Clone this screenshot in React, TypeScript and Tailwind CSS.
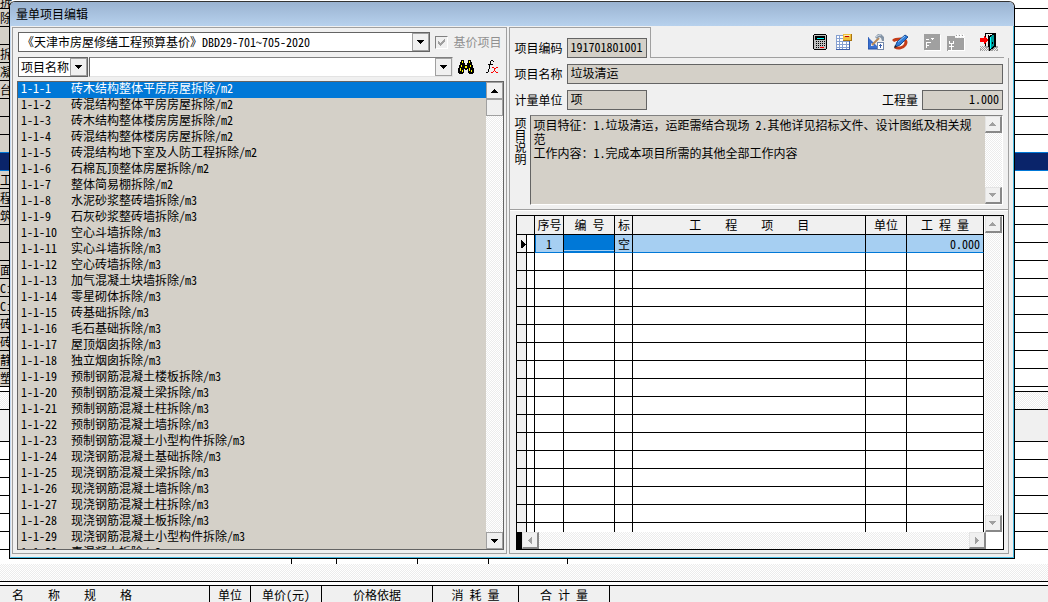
import React from 'react';
import clsx from 'clsx';

const items = [
  ['1-1-1', '砖木结构整体平房房屋拆除/m2'],
  ['1-1-2', '砖混结构整体平房房屋拆除/m2'],
  ['1-1-3', '砖木结构整体楼房房屋拆除/m2'],
  ['1-1-4', '砖混结构整体楼房房屋拆除/m2'],
  ['1-1-5', '砖混结构地下室及人防工程拆除/m2'],
  ['1-1-6', '石棉瓦顶整体房屋拆除/m2'],
  ['1-1-7', '整体简易棚拆除/m2'],
  ['1-1-8', '水泥砂浆整砖墙拆除/m3'],
  ['1-1-9', '石灰砂浆整砖墙拆除/m3'],
  ['1-1-10', '空心斗墙拆除/m3'],
  ['1-1-11', '实心斗墙拆除/m3'],
  ['1-1-12', '空心砖墙拆除/m3'],
  ['1-1-13', '加气混凝土块墙拆除/m3'],
  ['1-1-14', '零星砌体拆除/m3'],
  ['1-1-15', '砖基础拆除/m3'],
  ['1-1-16', '毛石基础拆除/m3'],
  ['1-1-17', '屋顶烟囱拆除/m3'],
  ['1-1-18', '独立烟囱拆除/m3'],
  ['1-1-19', '预制钢筋混凝土楼板拆除/m3'],
  ['1-1-20', '预制钢筋混凝土梁拆除/m3'],
  ['1-1-21', '预制钢筋混凝土柱拆除/m3'],
  ['1-1-22', '预制钢筋混凝土墙拆除/m3'],
  ['1-1-23', '预制钢筋混凝土小型构件拆除/m3'],
  ['1-1-24', '现浇钢筋混凝土基础拆除/m3'],
  ['1-1-25', '现浇钢筋混凝土梁拆除/m3'],
  ['1-1-26', '现浇钢筋混凝土墙拆除/m3'],
  ['1-1-27', '现浇钢筋混凝土柱拆除/m3'],
  ['1-1-28', '现浇钢筋混凝土板拆除/m3'],
  ['1-1-29', '现浇钢筋混凝土小型构件拆除/m3'],
  ['1-1-30', '素混凝土拆除/m3'],
];

const backRows = ['除', '', '拆', '凝', '台', '', '', '', '', '工', '程', '筑', '', '', '面', 'C±', 'C±', '砖', '砖', '静', '塑'];
const SELECTED_BACK_ROW = 8;

const checker = 'bg-[repeating-conic-gradient(#ececec_0_25%,#ffffff_0_50%)] bg-[length:2px_2px]';

type Direction = 'up' | 'down' | 'left' | 'right';

const arrowPaths: Record<Direction, string> = {
  up: 'M3 0h1v1h1v1h1v1h1v1H0V3h1V2h1V1h1z',
  down: 'M0 0h7v1H6v1H5v1H4v1H3V3H2V2H1V1H0z',
  left: 'M3 0h1v7H3V6H2V5H1V4H0V3h1V2h1V1h1z',
  right: 'M0 0h1v1h1v1h1v1h1v1H3v1H2v1H1v1H0z',
};

function Arrow({ direction, className }: { direction: Direction; className?: string }) {
  const flat = direction === 'up' || direction === 'down';
  return (
    <svg
      width={flat ? 7 : 4}
      height={flat ? 4 : 7}
      shapeRendering="crispEdges"
      className={className}
      aria-hidden={true}
    >
      <path d={arrowPaths[direction]} fill="currentColor" />
    </svg>
  );
}

function ScrollButton({ direction, disabled, label }: { direction: Direction; disabled?: boolean; label: string }) {
  return (
    <button
      type="button"
      aria-label={label}
      disabled={disabled}
      className={clsx(
        'flex size-[17px] shrink-0 items-center justify-center bg-[#f0f0f0]',
        disabled
          ? 'border-t border-l border-r-2 border-b-2 border-t-[#e3e3e3] border-l-[#e3e3e3] border-r-[#888888] border-b-[#888888] text-[#a0a0a0]'
          : 'border border-[#a0a0a0] text-black'
      )}
    >
      <Arrow direction={direction} />
    </button>
  );
}

function DropArrow() {
  return (
    <span className="pointer-events-none absolute top-px right-px bottom-px flex w-[17px] items-center justify-center border border-[#a0a0a0] bg-[#f0f0f0]">
      <Arrow direction="down" />
    </span>
  );
}

function Field({ id, value, className }: { id: string; value: string; className?: string }) {
  return (
    <input
      id={id}
      readOnly
      value={value}
      className={clsx('h-5 min-w-0 border border-[#646464] bg-[#d4d0c8] px-[3px] pb-[3px] outline-none', className)}
    />
  );
}

function BinocularsIcon() {
  return (
    <svg width="16" height="14" shapeRendering="crispEdges" aria-hidden={true}>
      <path
        d="M3 0h3v3h1v2h2V3h1V0h3v2h1v3h1v3h1v5h-1v1h-4v-1h-1V9H9v1H7V9H6v4H5v1H1v-1H0V8h1V5h1V2h1z"
        fill="#000"
      />
      <path d="M4 1h1v2H4zM11 1h1v2h-1zM3 5h1v2H3zM2 8h1v3H2zM12 5h1v2h-1zM11 8h1v3h-1zM7 6h2v2H7zM4 10h1v2H4zM13 10h1v2h-1z" fill="#ffff00" />
    </svg>
  );
}

function FunctionIcon() {
  return (
    <svg width="12" height="14" shapeRendering="crispEdges" aria-hidden={true}>
      <path d="M5 0h2v1H5zM7 1h1v1H7zM4 1h1v3H4zM2 4h5v1H2zM3 5h1v4H3zM2 9h1v3H2zM0 12h2v1H0z" fill="#000" />
      <path d="M6 7h2v1H6zM8 8h1v1H8zM8 9h1v2H8zM10 7h2v1h-2zM9 8h1v1H9zM7 11h1v1H7zM9 11h1v1H9zM5 12h2v1H5zM10 12h2v1h-2z" fill="#ff0000" />
    </svg>
  );
}

function CalculatorIcon() {
  return (
    <svg width="14" height="16" shapeRendering="crispEdges" aria-hidden={true}>
      <path d="M1 0h12v1h1v14h-1v1H1v-1H0V1h1z" fill="#000" />
      <path d="M1 1h12v14H1z" fill="#c0c0c0" />
      <path d="M2 2h10v4H2z" fill="#000" />
      <path d="M4 4h7v1H4z" fill="#00ffff" />
      <path d="M3 7h1v1H3zM5 7h1v1H5zM7 7h1v1H7zM9 7h1v1H9zM11 7h1v1h-1zM3 9h1v1H3zM5 9h1v1H5zM7 9h1v1H7zM9 9h1v1H9zM11 9h1v1h-1zM3 11h1v1H3zM5 11h1v1H5zM7 11h1v1H7zM9 11h1v1H9zM11 11h1v1h-1zM3 13h1v1H3zM5 13h1v1H5z" fill="#000" />
      <path d="M7 13h4v1H7z" fill="#ff0000" />
    </svg>
  );
}

function SheetIcon() {
  return (
    <svg width="17" height="16" shapeRendering="crispEdges" aria-hidden={true}>
      <path d="M0 1h14v15H0z" fill="#fff" />
      <path d="M0 1h7v1H0zM0 4h7v1H0zM0 7h14v1H0zM0 10h14v1H0zM0 13h14v1H0zM0 1h1v15H0zM3 1h1v15H3zM6 7h1v9H6zM10 7h1v9h-1z" fill="#86a0d0" />
      <path d="M0 15h14v1H0zM13 7h1v9h-1z" fill="#3c5ea8" />
      <path d="M7 0h9v7H7z" fill="#a87412" />
      <path d="M7 0h8v6H7z" fill="#f0bf3c" />
      <path d="M8 1h6v1H8z" fill="#fdeeb0" />
      <path d="M9 2h4v1H9z" fill="#c00000" />
    </svg>
  );
}

function ToolsIcon() {
  return (
    <svg width="17" height="16" aria-hidden={true}>
      <path fillRule="evenodd" d="M0 3v12h12zM3 9v3h3z" fill="#3a70d0" />
      <path d="M0 3v12h10" fill="none" stroke="#1f4aa0" />
      <path d="M11 4L4 11" stroke="#b98a58" strokeWidth="2" />
      <path d="M7 3l3-3h3l3 3v4h-2l-1-3-2-1-2 2z" fill="#8494a6" />
      <path d="M8 3l3-2h2" fill="none" stroke="#d5dfe9" />
      <path d="M9 8h7v8H9z" fill="#7388aa" />
      <path d="M10 9h5v6h-5z" fill="#fff" />
      <path d="M12 10h1v4h-1zM11 11h3v1h-3z" fill="#3c5ea8" />
    </svg>
  );
}

function PenIcon() {
  return (
    <svg width="17" height="16" aria-hidden={true}>
      <path d="M1 7c2-2 5-2 8-2 5 0 6 3 4 6-2 3-7 4-10 2" fill="none" stroke="#c43c18" strokeWidth="3" />
      <path d="M3 13l2-5 8-7 3 2-8 8z" fill="#2f7cd8" stroke="#154a96" />
      <path d="M6 8l7-6" stroke="#8cc8ff" strokeWidth="1" />
      <path d="M2 14l1-3 2 2z" fill="#202020" />
    </svg>
  );
}

function ReportIcon() {
  return (
    <svg width="17" height="17" shapeRendering="crispEdges" aria-hidden={true}>
      <path d="M1 1h16v16H1z" fill="#fff" />
      <path d="M0 0h16v16H0z" fill="#a0a0a0" />
      <path d="M2 5h3v1H2zM7 4h3v1H7zM8 5h1v1H8zM2 8h5v1H2zM2 9h1v5H2zM3 11h2v1H3z" fill="#fff" />
    </svg>
  );
}

function NotesIcon() {
  return (
    <svg width="19" height="17" shapeRendering="crispEdges" aria-hidden={true}>
      <path d="M0 2h8v2h10v1h-1v12H0z" fill="#a0a0a0" />
      <path d="M10 0h1v4h-1zM13 0h1v4h-1zM16 0h1v4h-1zM8 2h10v1H8zM2 7h1v2H2zM6 7h1v2H6zM2 9h5v1H2zM2 12h5v1H2zM4 9h1v7H4zM17 4h1v13h-1zM1 16h17v1H1z" fill="#fff" />
      <path d="M9 1h1v1H9zM12 1h1v1h-1zM15 1h1v1h-1z" fill="#a0a0a0" />
    </svg>
  );
}

function ExitIcon() {
  return (
    <svg width="18" height="18" shapeRendering="crispEdges" aria-hidden={true}>
      <path d="M0 13h18v5H0z" fill="#a0a0a0" />
      <path
        d="M1 13h1v1H1zM3 13h1v1H3zM0 14h1v1H0zM2 14h1v1H2zM4 14h1v1H4zM1 15h1v1H1zM3 15h1v1H3zM5 15h1v1H5zM7 15h1v1H7zM2 16h1v1H2zM4 16h1v1H4zM6 16h1v1H6zM1 17h1v1H1zM3 17h1v1H3zM5 17h1v1H5zM7 17h1v1H7zM13 17h1v1h-1zM15 17h1v1h-1zM14 16h1v1h-1zM16 16h1v1h-1zM15 15h1v1h-1zM17 15h1v1h-1z"
        fill="#f0f0f0"
      />
      <path d="M5 0h11v1H5zM5 0h1v13H5zM15 0h1v14h-1zM8 2h1v12H8z" fill="#000" />
      <path d="M9 3h1V2h2V1h3v13h-1v1h-1v1h-2v1h-1v1H9z" fill="#000" />
      <path d="M10 4h1V3h1V2h2v11h-1v1h-1v1h-1v1h-1z" fill="#009a9a" />
      <path d="M10 4h1v12h-1z" fill="#00ffff" />
      <path d="M12 9h1v2h-1z" fill="#000" />
      <path d="M0 5h4V3h1v1h1v1h1v1h1v2H7v1H6v1H5v1H4V9H0z" fill="#ff0000" />
    </svg>
  );
}

function ToolButton({ label, disabled, className, children }: { label: string; disabled?: boolean; className?: string; children: React.ReactNode }) {
  return (
    <button type="button" aria-label={label} disabled={disabled} className={clsx('flex shrink-0 items-center', className)}>
      {children}
    </button>
  );
}

function BackSheet() {
  return (
    <div className="flex h-full flex-col overflow-hidden bg-white">
      <div className="flex h-[9px] shrink-0 border-b border-black">
        <div className="flex w-3 items-end overflow-hidden bg-[#d4d0c8] leading-3">拆</div>
      </div>
      {backRows.map((text, i) => (
        <div
          key={i}
          className={clsx(
            'flex h-[18px] shrink-0 border-b leading-[17px]',
            i === SELECTED_BACK_ROW
              ? 'border-[#0078d7] bg-[#0a246a]'
              : i === SELECTED_BACK_ROW - 1
                ? 'border-[#0078d7]'
                : 'border-black'
          )}
        >
          <div className={clsx('w-3', i !== SELECTED_BACK_ROW && 'bg-[#d4d0c8]')}>{text}</div>
        </div>
      ))}
      <div className="h-[5px] shrink-0 border-b border-black" />
      <div className={clsx('h-[18px] shrink-0 border-b border-black', checker)} />
      <div className="h-8 shrink-0 border-b border-black bg-[#f0f0f0]" />
      {[0, 1, 2, 3, 4, 5].map((i) => (
        <div key={i} className="h-[18px] shrink-0 border-b border-black" />
      ))}
      <div className="flex min-h-0 flex-1">
        <div className="w-[292px] border-r border-black" />
        <div className="w-[45px] border-r border-black" />
        <div className="w-[81px] border-r border-black" />
        <div className="w-[71px] border-r border-black" />
        <div className="w-[79px] border-r border-black" />
      </div>
      <div className={clsx('h-[18px] shrink-0 border-b border-black', checker)} />
      <div className="h-1 shrink-0 border-b border-black bg-white" />
      <div className="flex h-4 shrink-0 bg-[#f0f0f0] text-center leading-[18px] whitespace-pre">
        <div className="w-[210px] border-r border-black pl-3 text-left">名    称    规    格</div>
        <div className="w-[41px] border-r border-black">单位</div>
        <div className="w-[71px] border-r border-black">单价(元)</div>
        <div className="w-[111px] border-r border-black">价格依据</div>
        <div className="w-[86px] border-r border-black">消 耗 量</div>
        <div className="w-[91px] border-r border-black">合 计 量</div>
      </div>
    </div>
  );
}

function PriceListPanel() {
  return (
    <section className="flex min-w-0 flex-col border border-[#a0a0a0] pt-1 pr-[2px] pb-[3px] pl-1">
      <div className="flex h-5 items-center pr-[3px]">
        <div className="relative ml-px min-w-0 flex-1">
          <select
            aria-label="定额库"
            className="block h-5 w-full appearance-none border border-[#646464] bg-white pl-[3px] leading-4 outline-none"
          >
            <option>《天津市房屋修缮工程预算基价》DBD29-701~705-2020</option>
          </select>
          <DropArrow />
        </div>
        <label className="ml-[5px] flex shrink-0 items-center gap-[5px] text-[#909090]">
          <span className="relative flex">
            <input
              type="checkbox"
              defaultChecked
              disabled
              className="size-[13px] appearance-none border border-t-[#808080] border-r-white border-b-white border-l-[#808080] bg-[#f0f0f0]"
            />
            <svg width="9" height="8" shapeRendering="crispEdges" className="absolute top-[2px] left-[2px]" aria-hidden={true}>
              <path d="M1 3h1v1h1v1h1V4h1V3h1V2h1V1h1v3H7v1H6v1H5v1H4v1H3V7H2V6H1z" fill="#a0a0a0" />
            </svg>
          </span>
          基价项目
        </label>
      </div>
      <div className="mt-[5px] flex h-5 items-center pr-[2px]">
        <div className="relative ml-px w-[70px] shrink-0">
          <select
            aria-label="查找字段"
            className="block h-5 w-full appearance-none border border-[#646464] bg-white pl-[2px] leading-4 outline-none"
          >
            <option>项目名称</option>
          </select>
          <DropArrow />
        </div>
        <div className="relative ml-px min-w-0 flex-1">
          <input
            aria-label="查找内容"
            className="block h-5 w-full border border-t-[#808080] border-r-[#e3e3e3] border-b-[#e3e3e3] border-l-[#646464] bg-white px-1 outline-none"
          />
          <DropArrow />
        </div>
        <button type="button" aria-label="查找" className="ml-[5px] shrink-0">
          <BinocularsIcon />
        </button>
        <button type="button" aria-label="函数" className="mr-1 ml-3 shrink-0">
          <FunctionIcon />
        </button>
      </div>
      <div className="mt-1 flex min-h-0 flex-1 border border-[#646464] bg-[#d4d0c8]">
        <ul role="listbox" aria-label="定额项目" className="min-w-0 flex-1 overflow-hidden">
          {items.map(([code, name], i) => (
            <li
              key={code}
              role="option"
              aria-selected={i === 0}
              className={clsx('flex h-4 pl-[3px] leading-3', i === 0 && 'bg-[#0078d7] text-white')}
            >
              <span className="w-[50px] shrink-0">{code}</span>
              <span className="whitespace-nowrap">{name}</span>
            </li>
          ))}
        </ul>
        <div className={clsx('flex w-[17px] flex-col', checker)}>
          <ScrollButton direction="up" label="列表上移" />
          <div className="h-[17px] border border-[#a0a0a0] bg-[#f0f0f0]" />
          <div className="flex-1" />
          <ScrollButton direction="down" label="列表下移" />
        </div>
      </div>
    </section>
  );
}

function ItemTable() {
  const cell = 'border-r border-b border-black p-0';
  const head = 'border-r border-b border-black bg-[#f0f0f0] p-0 font-normal whitespace-pre';
  const active = 'border-r border-b border-r-black border-b-[#0078d7] p-0';
  return (
    <div className="mt-1 mr-1 ml-[6px] flex min-h-0 flex-1 flex-col border border-black bg-white">
      <div className="flex min-h-0 flex-1">
        <div className="min-h-0 min-w-0 flex-1 overflow-hidden pr-px">
          <table className="w-full table-fixed border-separate border-spacing-0 leading-4">
            <colgroup>
              <col className="w-[10px]" />
              <col className="w-2" />
              <col className="w-[29px]" />
              <col className="w-[51px]" />
              <col className="w-[18px]" />
              <col />
              <col className="w-[41px]" />
              <col className="w-[77px]" />
            </colgroup>
            <thead>
              <tr className="h-[19px]">
                <th colSpan={2} className={head} />
                <th className={head}>序号</th>
                <th className={head}>编 号</th>
                <th className={head}>标</th>
                <th className={head}>工    程    项    目</th>
                <th className={head}>单位</th>
                <th className={head}>工 程 量</th>
              </tr>
            </thead>
            <tbody>
              <tr className="h-[18px] bg-[#a6cff2] leading-[14px]">
                <td className={clsx(cell, 'bg-[#f0f0f0] pt-[2px] pl-1')}>
                  <svg width="5" height="9" shapeRendering="crispEdges" className="block" aria-hidden={true}>
                    <path d="M0 0h1v1h1v1h1v1h1v1h1v1H4v1H3v1H2v1H0z" />
                  </svg>
                </td>
                <td className={clsx(cell, 'bg-white')} />
                <td className={clsx(active, 'border-l border-l-[#0078d7] pr-[2px] text-center')}>1</td>
                <td className={clsx(active, 'bg-[#0078d7] align-bottom')}>
                  <div className="mb-px border-b border-[#a6cff2]" />
                </td>
                <td className={clsx(active, 'text-center')}>空</td>
                <td className={active} />
                <td className={active} />
                <td className={clsx(active, 'pr-[3px] text-right')}>0.000</td>
              </tr>
              {Array.from({ length: 16 }, (_, i) => (
                <tr key={i} className="h-[18px]">
                  <td className={clsx(cell, 'bg-[#f0f0f0]')} />
                  <td className={cell} />
                  <td className={cell} />
                  <td className={cell} />
                  <td className={cell} />
                  <td className={cell} />
                  <td className={cell} />
                  <td className={cell} />
                </tr>
              ))}
            </tbody>
          </table>
        </div>
        <div className={clsx('mr-px flex w-[17px] flex-col justify-between', checker)}>
          <ScrollButton direction="up" disabled label="表格上移" />
          <ScrollButton direction="down" disabled label="表格下移" />
        </div>
      </div>
      <div className="flex h-[17px] shrink-0">
        <div className="w-[5px] bg-black" />
        <div className={clsx('flex flex-1 justify-between', checker)}>
          <ScrollButton direction="left" disabled label="表格左移" />
          <ScrollButton direction="right" disabled label="表格右移" />
        </div>
        <div className="w-[17px] bg-white" />
      </div>
    </div>
  );
}

function DetailPanel() {
  return (
    <section className="flex min-w-0 flex-col">
      <div className="flex h-[31px] shrink-0">
        <div className="flex w-[142px] shrink-0 items-center gap-1 border-t border-r border-l border-[#a0a0a0] pt-[10px] pl-1">
          <label htmlFor="code">项目编码</label>
          <Field id="code" value="191701801001" className="w-20" />
        </div>
        <div className="mr-[5px] flex flex-1 items-center justify-end border-b border-[#a0a0a0] pr-[6px]">
          <ToolButton label="计算器">
            <CalculatorIcon />
          </ToolButton>
          <ToolButton label="表格" className="ml-[9px]">
            <SheetIcon />
          </ToolButton>
          <ToolButton label="工具" className="ml-[15px]">
            <ToolsIcon />
          </ToolButton>
          <ToolButton label="编辑" className="ml-[7px]">
            <PenIcon />
          </ToolButton>
          <ToolButton label="报表" disabled className="ml-[15px]">
            <ReportIcon />
          </ToolButton>
          <ToolButton label="备注" disabled className="ml-[6px]">
            <NotesIcon />
          </ToolButton>
          <ToolButton label="退出" className="ml-[14px]">
            <ExitIcon />
          </ToolButton>
        </div>
      </div>
      <div className="flex min-h-0 flex-1 flex-col border-r border-b border-l border-[#a0a0a0] pb-[3px]">
        <div className="flex flex-col gap-[6px] pt-[6px] pr-[5px] pl-1">
          <div className="flex items-center gap-1">
            <label htmlFor="name">项目名称</label>
            <Field id="name" value="垃圾清运" className="flex-1" />
          </div>
          <div className="flex items-center gap-1">
            <label htmlFor="unit">计量单位</label>
            <Field id="unit" value="项" className="w-20" />
            <label htmlFor="quantity" className="ml-auto">工程量</label>
            <Field id="quantity" value="1.000" className="w-[81px] text-right" />
          </div>
          <div className="-mt-px flex gap-1">
            <label htmlFor="note" className="w-3 pt-[2px] leading-3 break-all">项目说明</label>
            <div className="flex h-[90px] flex-1 border border-t-[#808080] border-r-white border-b-white border-l-[#646464] bg-[#d4d0c8]">
              <textarea
                id="note"
                readOnly
                className="block min-w-0 flex-1 resize-none overflow-hidden bg-transparent py-[2px] pr-1 pl-[2px] leading-[14px] outline-none"
                value={'项目特征：1.垃圾清运，运距需结合现场 2.其他详见招标文件、设计图纸及相关规范\n工作内容：1.完成本项目所需的其他全部工作内容'}
              />
              <div className={clsx('flex w-[17px] flex-col justify-between', checker)}>
                <ScrollButton direction="up" disabled label="说明上移" />
                <ScrollButton direction="down" disabled label="说明下移" />
              </div>
            </div>
          </div>
        </div>
        <div className="mt-1 border-t border-b border-t-[#a0a0a0] border-b-white" />
        <ItemTable />
      </div>
    </section>
  );
}

export default function App() {
  return (
    <main className="relative h-screen overflow-hidden font-['Noto_Sans_Mono_CJK_SC','Noto_Sans_CJK_SC',sans-serif] text-[12px] leading-4 text-black">
      <BackSheet />
      <div
        role="dialog"
        aria-labelledby="dialog-title"
        className="absolute top-px right-[33px] bottom-[43px] left-[9px] flex flex-col overflow-hidden rounded-t-md border border-black border-t-[#333333] bg-[#f0f0f0]"
      >
        <h1
          id="dialog-title"
          className="h-6 shrink-0 bg-linear-to-b from-[#9ab3d1] to-[#b7d1ed] pl-[6px] leading-6 font-normal"
        >
          量单项目编辑
        </h1>
        <div className="grid min-h-0 flex-1 grid-cols-[495fr_499fr] grid-rows-1 gap-[2px] border-r border-b border-l border-r-[#46b8e0] border-b-[#46b8e0] border-l-[#c4d8ee] pt-px pr-1 pb-[3px] pl-px">
          <PriceListPanel />
          <DetailPanel />
        </div>
      </div>
    </main>
  );
}
